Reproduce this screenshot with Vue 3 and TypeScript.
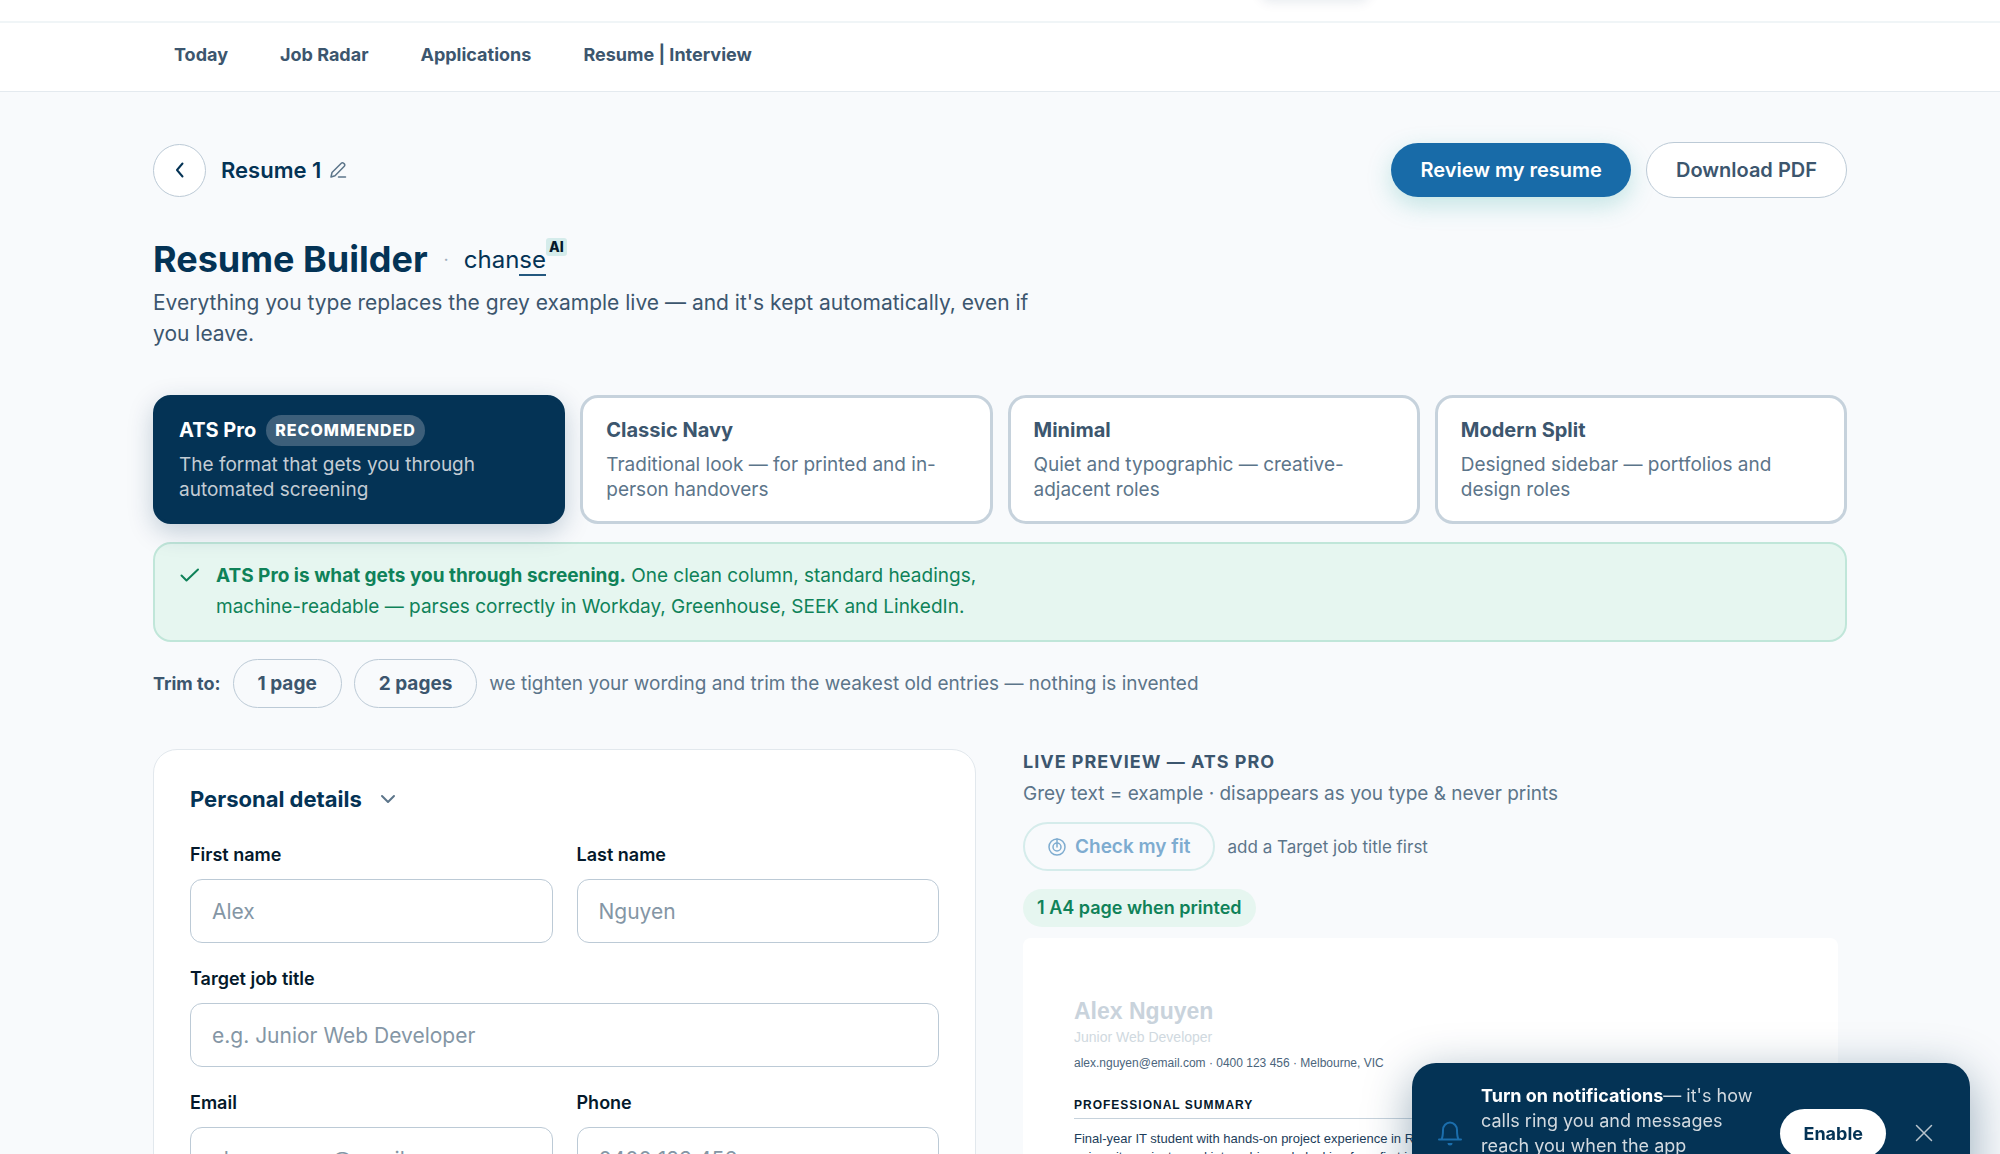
<script setup lang="ts">
import { ref } from 'vue'

interface Template {
  name: string
  description: string
  recommended?: boolean
}

interface Field {
  id: string
  label: string
  placeholder: string
  type: string
  wide?: boolean
}

const links: string[] = ['Today', 'Job Radar', 'Applications', 'Resume | Interview']

const templates: Template[] = [
  { name: 'ATS Pro', description: 'The format that gets you through automated screening', recommended: true },
  { name: 'Classic Navy', description: 'Traditional look — for printed and in-person handovers' },
  { name: 'Minimal', description: 'Quiet and typographic — creative-adjacent roles' },
  { name: 'Modern Split', description: 'Designed sidebar — portfolios and design roles' },
]

const fields: Field[] = [
  { id: 'first-name', label: 'First name', placeholder: 'Alex', type: 'text' },
  { id: 'last-name', label: 'Last name', placeholder: 'Nguyen', type: 'text' },
  { id: 'job-title', label: 'Target job title', placeholder: 'e.g. Junior Web Developer', type: 'text', wide: true },
  { id: 'email', label: 'Email', placeholder: 'alex.nguyen@email.com', type: 'email' },
  { id: 'phone', label: 'Phone', placeholder: '0400 123 456', type: 'tel' },
]

const selected = ref<string>('ATS Pro')
const values = ref<Record<string, string>>({})
const toastOpen = ref<boolean>(true)
</script>

<template>
  <div class="page">
    <header class="topbar"><span class="topbar-glow"></span></header>
    <nav class="nav">
      <div class="container nav-links">
        <a v-for="link in links" :key="link" href="#">{{ link }}</a>
      </div>
    </nav>

    <main class="container main">
      <div class="toolbar">
        <button class="back" type="button" aria-label="Back">
          <svg width="20" height="20" viewBox="0 0 20 20"><path d="M12.5 3.5 7 10l5.500 6.500" /></svg>
        </button>
        <span class="doc-name">Resume 1</span>
        <button class="rename" type="button" aria-label="Rename">
          <svg width="18" height="18" viewBox="0 0 18 18"><path d="M2 16l1-4.500L12.300 2.200a1.600 1.600 0 0 1 2.300 0l.7.7a1.600 1.600 0 0 1 0 2.300L6 14.700 2 16ZM9.500 16H16.500" /></svg>
        </button>
        <div class="actions">
          <button class="primary" type="button">Review my resume</button>
          <button class="secondary" type="button">Download PDF</button>
        </div>
      </div>

      <div class="title-row">
        <h1>Resume Builder</h1>
        <span class="dot">·</span>
        <span class="brand">chan<span class="brand-line">se</span><sup>AI</sup></span>
      </div>
      <p class="intro">Everything you type replaces the grey example live — and it's kept automatically, even if you leave.</p>

      <div class="templates">
        <button
          v-for="item in templates"
          :key="item.name"
          type="button"
          class="template"
          :class="{ active: selected === item.name }"
          @click="selected = item.name"
        >
          <span class="template-head">
            <span class="template-name">{{ item.name }}</span>
            <span v-if="item.recommended" class="badge">RECOMMENDED</span>
          </span>
          <span class="template-text">{{ item.description }}</span>
        </button>
      </div>

      <div class="notice">
        <svg width="20" height="20" viewBox="0 0 20 20"><path d="M1.500 10.500 6.500 15.500 18 4.500" /></svg>
        <p><strong>ATS Pro is what gets you through screening.</strong> One clean column, standard headings, machine-readable — parses correctly in Workday, Greenhouse, SEEK and LinkedIn.</p>
      </div>

      <div class="trim">
        <span class="trim-label">Trim to:</span>
        <button type="button" class="pill">1 page</button>
        <button type="button" class="pill">2 pages</button>
        <span class="trim-note">we tighten your wording and trim the weakest old entries — nothing is invented</span>
      </div>

      <div class="columns">
        <form class="form-card" @submit.prevent>
          <h2>
            Personal details
            <svg width="16" height="16" viewBox="0 0 16 16"><path d="M2 5l6 6 6-6" /></svg>
          </h2>
          <div class="fields">
            <div v-for="field in fields" :key="field.id" class="field" :class="{ wide: field.wide }">
              <label :for="field.id">{{ field.label }}</label>
              <input :id="field.id" v-model="values[field.id]" :type="field.type" :placeholder="field.placeholder" />
            </div>
          </div>
        </form>

        <section class="preview">
          <h3>LIVE PREVIEW — ATS PRO</h3>
          <p class="hint">Grey text = example · disappears as you type &amp; never prints</p>
          <div class="fit">
            <button type="button" class="fit-button" disabled>
              <svg width="18" height="18" viewBox="0 0 18 18"><circle cx="9" cy="9" r="8" /><circle cx="9" cy="9" r="4" /><path d="M9 1v8" /></svg>
              Check my fit
            </button>
            <span class="fit-note">add a Target job title first</span>
          </div>
          <span class="pages">1 A4 page when printed</span>
          <article class="paper">
            <p class="paper-name">Alex Nguyen</p>
            <p class="paper-role">Junior Web Developer</p>
            <p class="paper-contact">alex.nguyen@email.com · 0400 123 456 · Melbourne, VIC</p>
            <h4>PROFESSIONAL SUMMARY</h4>
            <p class="paper-text">Final-year IT student with hands-on project experience in React, Node and SQL, built across team assignments and university projects, and internship work, looking for a first junior role.</p>
          </article>
        </section>
      </div>
    </main>

    <aside v-if="toastOpen" class="toast">
      <svg class="bell" width="24" height="28" viewBox="0 0 24 28"><path d="M1 20.500h22M3.500 20.500c1.200-2.500 1.500-5 1.500-9.500a7 7.500 0 0 1 14 0c0 4.500.3 7 1.500 9.500" /><path class="clapper" d="M9.500 24a2.500 2.500 0 0 0 5 0Z" /></svg>
      <p><strong>Turn on notifications</strong>— it's how calls ring you and messages reach you when the app</p>
      <button type="button" class="enable">Enable</button>
      <button type="button" class="close" aria-label="Dismiss" @click="toastOpen = false">
        <svg width="18" height="18" viewBox="0 0 18 18"><path d="M1.500 1.500l15 15M16.500 1.500l-15 15" /></svg>
      </button>
    </aside>
  </div>
</template>

<style>
body {
  background: #f8fafc;
}
</style>

<style scoped>
* {
  box-sizing: border-box;
}
.page {
  height: 100vh;
  overflow: hidden;
  background: #f8fafc;
  font-family: Inter, sans-serif;
  font-size: 18px;
  color: #3c566e;
}
h1, h2, h3, h4, p {
  margin: 0;
}
button {
  font: inherit;
  color: inherit;
  border: 0;
  padding: 0;
  background: none;
  cursor: pointer;
}
svg {
  display: block;
  flex: none;
  fill: none;
  stroke: currentColor;
  stroke-width: 2;
  stroke-linecap: round;
  stroke-linejoin: round;
}
.container {
  max-width: 1694px;
  margin: 0 auto;
}
.topbar {
  position: relative;
  height: 23px;
  background: #fff;
  border-bottom: 2px solid #f0f5f7;
  overflow: hidden;
}
.topbar-glow {
  position: absolute;
  top: -20px;
  left: 63%;
  width: 110px;
  height: 20px;
  border-radius: 10px;
  box-shadow: 0 2px 12px #0433551a;
}
.nav {
  background: #fff;
  border-bottom: 1px solid #e4eaef;
}
.nav-links {
  display: flex;
  gap: 52px;
  height: 68px;
  padding: 0 21px 5px;
  align-items: center;
}
.nav-links a {
  color: inherit;
  font-weight: 700;
  text-decoration: none;
}
.main {
  padding-top: 50px;
}
.toolbar {
  display: flex;
  align-items: center;
}
.back {
  display: grid;
  place-items: center;
  width: 53px;
  height: 53px;
  border: 1px solid #bccad6;
  border-radius: 50%;
  background: #fff;
  color: #043355;
}
.doc-name {
  margin-left: 15px;
  font-size: 22px;
  font-weight: 600;
  color: #043355;
}
.rename {
  margin-left: 8px;
  color: #5c758a;
}
.rename svg {
  stroke-width: 1.5;
}
.actions {
  display: flex;
  align-items: center;
  gap: 15px;
  margin-left: auto;
  font-size: 20px;
  font-weight: 600;
}
.primary {
  height: 54px;
  padding: 0 29px;
  border-radius: 27px;
  background: #186ba8;
  color: #fff;
  box-shadow: 0 8px 24px #2ba8a044;
}
.secondary {
  height: 56px;
  padding: 0 29px;
  border: 1px solid #bccad6;
  border-radius: 28px;
  background: #fff;
}
.title-row {
  display: flex;
  align-items: center;
  height: 50px;
  margin-top: 36px;
}
h1 {
  font-size: 36px;
  font-weight: 700;
  color: #043355;
}
.dot {
  margin-left: 16px;
  color: #9fb0be;
}
.brand {
  position: relative;
  margin-left: 15px;
  font-size: 24px;
  color: #043355;
}
.brand-line {
  border-bottom: 2px solid #24587f;
}
.brand sup {
  position: absolute;
  left: 100%;
  top: -7px;
  padding: 0 3px;
  border-radius: 3px;
  background: #d5eceb;
  font-size: 14px;
  line-height: 18px;
  font-weight: 800;
  color: #04192b;
}
.intro {
  max-width: 895px;
  margin-top: 3px;
  font-size: 21px;
  line-height: 31px;
}
.templates {
  display: grid;
  grid-template-columns: repeat(4, 1fr);
  gap: 15px;
  margin-top: 46px;
}
.template {
  display: flex;
  flex-direction: column;
  gap: 6px;
  height: 129px;
  padding: 16px 23px;
  border: 3px solid #c6d2dc;
  border-radius: 18px;
  background: #fff;
  text-align: left;
}
.template-head {
  display: flex;
  align-items: center;
  gap: 10px;
  height: 32px;
}
.template-name {
  font-size: 20px;
  font-weight: 700;
}
.badge {
  padding: 0 9px;
  border-radius: 16px;
  background: #3d5f7a;
  font-size: 16px;
  line-height: 31px;
  font-weight: 800;
  letter-spacing: 1px;
  color: #fff;
}
.template-text {
  font-size: 19px;
  line-height: 25px;
  color: #5c758a;
}
.template.active {
  border-color: #043355;
  background: #043355;
  color: #fff;
  box-shadow: 0 8px 26px #04335538;
}
.active .template-text {
  color: #c3ccd4;
}
.notice {
  display: flex;
  gap: 16px;
  height: 100px;
  margin-top: 18px;
  padding: 16px 25px;
  border: 2px solid #c0e6d9;
  border-radius: 18px;
  background: #e6f6f0;
  color: #0f8259;
}
.notice svg {
  margin-top: 5px;
}
.notice p {
  max-width: 800px;
  font-size: 19px;
  line-height: 31px;
}
.notice strong {
  font-weight: 700;
}
.trim {
  display: flex;
  align-items: center;
  gap: 12px;
  margin-top: 17px;
  font-size: 19px;
}
.trim-label {
  font-size: 18px;
  font-weight: 700;
}
.pill {
  height: 49px;
  padding: 0 24px;
  border: 1px solid #bccad6;
  border-radius: 25px;
  font-weight: 700;
}
.trim-note {
  color: #5c758a;
}
.columns {
  display: grid;
  grid-template-columns: 823fr 824fr;
  gap: 47px;
  margin-top: 41px;
}
.form-card {
  padding: 33px 36px;
  border: 1px solid #e2e8ed;
  border-radius: 24px;
  background: #fff;
}
h2 {
  display: flex;
  align-items: center;
  gap: 18px;
  font-size: 22px;
  line-height: 32px;
  font-weight: 700;
  color: #043355;
}
h2 svg {
  color: #5c758a;
}
.fields {
  display: grid;
  grid-template-columns: 1fr 1fr;
  gap: 24px;
  margin-top: 28px;
}
.field {
  display: flex;
  flex-direction: column;
  gap: 12px;
}
.field.wide {
  grid-column: 1 / -1;
}
.field label {
  font-weight: 600;
  line-height: 24px;
  color: #04192b;
}
.field input {
  width: 100%;
  height: 64px;
  padding: 0 21px;
  border: 1px solid #bccad6;
  border-radius: 12px;
  background: #fff;
  font: inherit;
  font-size: 21px;
  color: #04192b;
}
.field input::placeholder {
  color: #8496a5;
  opacity: 1;
}
.preview {
  display: flex;
  flex-direction: column;
  align-items: flex-start;
}
h3 {
  font-size: 18px;
  line-height: 26px;
  font-weight: 700;
  letter-spacing: 1px;
}
.hint {
  margin-top: 6px;
  font-size: 19px;
  line-height: 26px;
  color: #5c758a;
}
.fit {
  display: flex;
  align-items: center;
  gap: 12px;
  margin-top: 15px;
}
.fit-button {
  display: flex;
  align-items: center;
  gap: 9px;
  height: 49px;
  padding: 0 23px;
  border: 2px solid #d5eceb;
  border-radius: 25px;
  font-size: 19px;
  font-weight: 600;
  color: #7eacd0;
}
.fit-button svg {
  stroke-width: 1.5;
}
.fit-note {
  font-size: 17px;
  color: #5c758a;
}
.pages {
  margin-top: 18px;
  padding: 0 14px;
  border-radius: 19px;
  background: #e6f6f0;
  font-size: 18px;
  line-height: 38px;
  font-weight: 600;
  color: #0f8259;
}
.paper {
  align-self: stretch;
  margin: 11px 9px 0 0;
  padding: 57px 51px;
  border-radius: 8px;
  background: #fff;
  font-family: "Liberation Sans", Arial, sans-serif;
  color: #1c3d5a;
}
.paper-name {
  font-size: 23px;
  line-height: 32px;
  font-weight: 700;
  color: #c9d3dc;
}
.paper-role {
  font-size: 14px;
  line-height: 20px;
  color: #d0d9e0;
}
.paper-contact {
  margin-top: 6px;
  font-size: 12px;
  line-height: 20px;
  color: #4b657c;
}
h4 {
  margin-top: 22px;
  padding-bottom: 3px;
  border-bottom: 1px solid #c6d2dc;
  font-size: 12px;
  line-height: 20px;
  letter-spacing: 1px;
  color: #04192b;
}
.paper-text {
  margin-top: 11px;
  font-size: 13px;
  line-height: 18px;
}
.toast {
  position: fixed;
  right: 30px;
  bottom: -49px;
  display: flex;
  align-items: center;
  width: 558px;
  height: 140px;
  padding: 20px 24px 20px 26px;
  border-radius: 24px;
  background: #043355;
  color: #fff;
  box-shadow: 0 12px 48px #04335566;
}
.bell {
  color: #1b6eac;
}
.bell .clapper {
  fill: currentColor;
  stroke: none;
}
.toast p {
  align-self: flex-start;
  width: 282px;
  margin-left: 19px;
  line-height: 25px;
  color: #d3dae0;
}
.toast strong {
  font-weight: 700;
  color: #fff;
}
.enable {
  height: 49px;
  margin-left: auto;
  padding: 0 23px;
  border-radius: 25px;
  background: #fff;
  font-weight: 700;
  color: #043355;
}
.close {
  display: grid;
  place-items: center;
  width: 44px;
  height: 44px;
  margin-left: 16px;
  color: #b9c4cd;
}
.close svg {
  stroke-width: 1.5;
}
</style>
